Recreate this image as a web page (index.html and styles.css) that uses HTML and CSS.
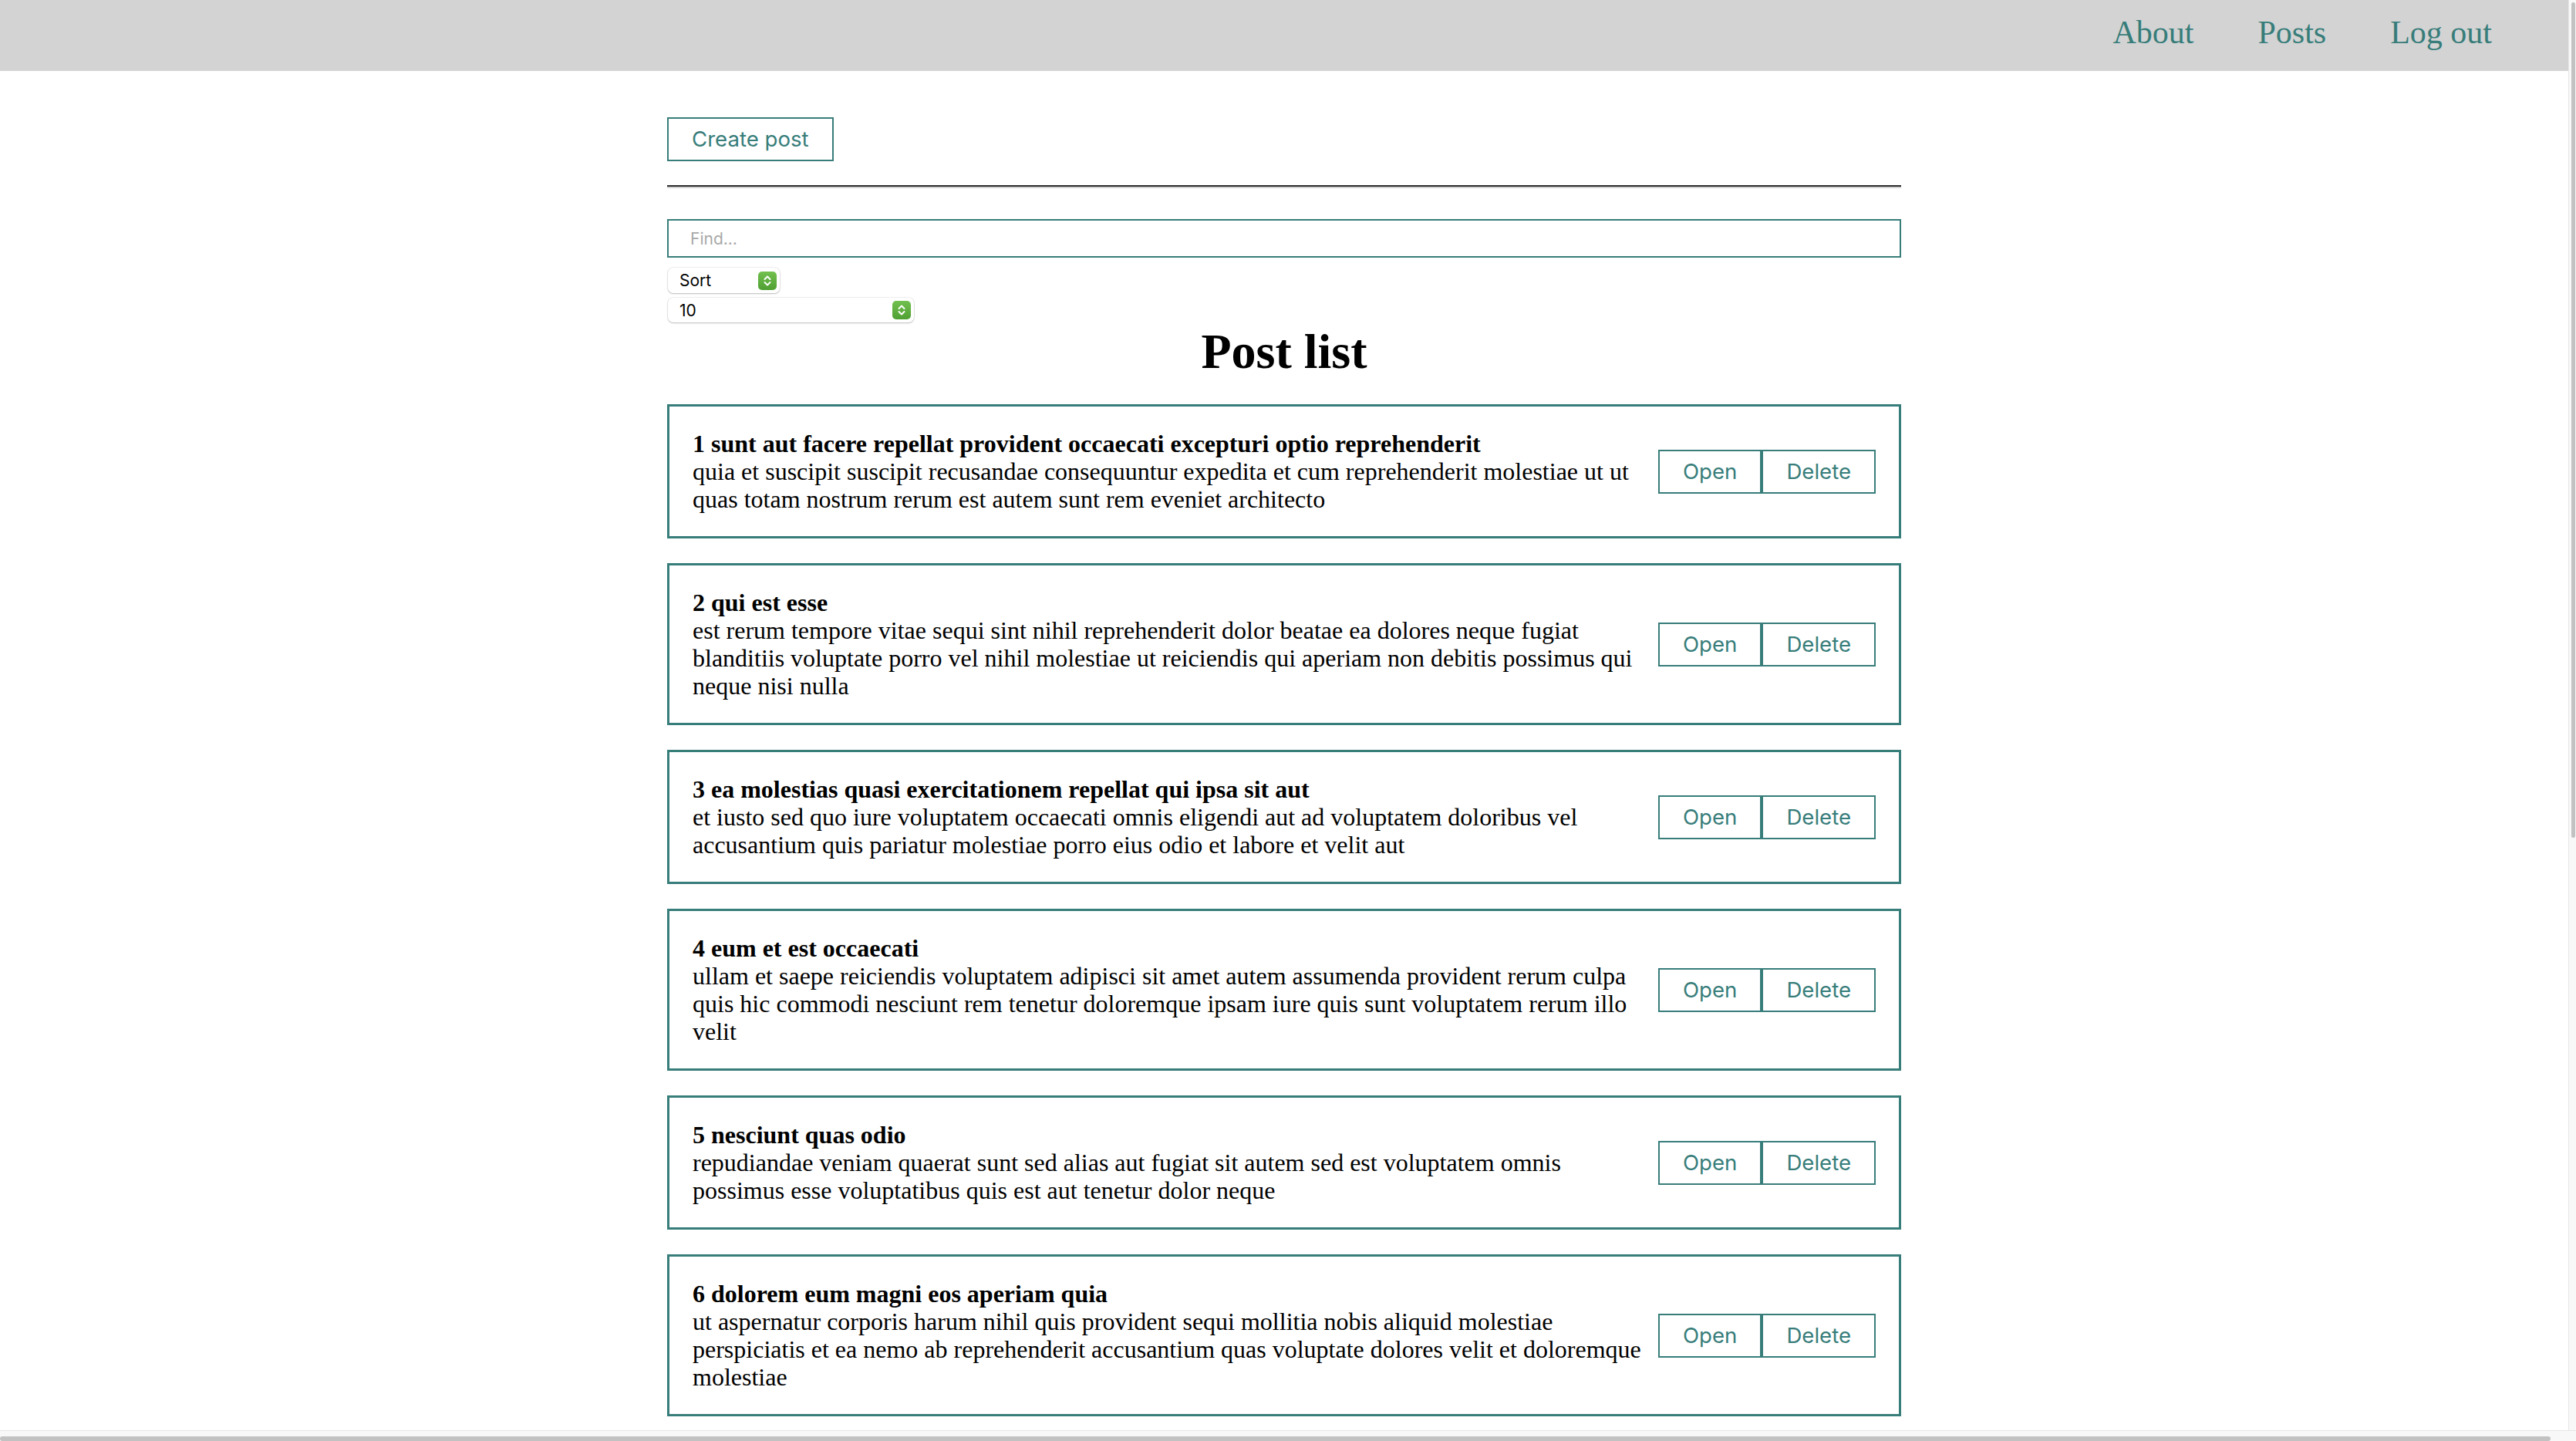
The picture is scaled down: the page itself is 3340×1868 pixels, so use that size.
FILE: index.html
```html
<!DOCTYPE html>
<html lang="en">
<head>
<meta charset="utf-8">
<title>Post list</title>
<link rel="stylesheet" href="styles.css">
</head>
<body>
<div class="app">
  <nav class="navbar">
    <a class="nav-link" href="#">About</a>
    <a class="nav-link" href="#">Posts</a>
    <a class="nav-link" href="#">Log out</a>
  </nav>
  <main class="page">
    <div class="toolbar">
      <button class="btn">Create post</button>
    </div>
    <hr class="divider">
    <input class="find" type="text" placeholder="Find...">
    <div class="selects">
      <div class="select select-sort">
        <span>Sort</span>
        <svg class="stepper" viewBox="0 0 24 24" width="24" height="24"><defs><linearGradient id="g1" x1="0" y1="0" x2="0" y2="1"><stop offset="0" stop-color="#72c04e"/><stop offset="1" stop-color="#4f9f33"/></linearGradient></defs><rect width="24" height="24" rx="5" fill="url(#g1)"/><path d="M8.5 10 L12 6.5 L15.5 10 M8.5 14 L12 17.5 L15.5 14" fill="none" stroke="#fff" stroke-width="2" stroke-linecap="round" stroke-linejoin="round"/></svg>
      </div>
      <div class="select select-limit">
        <span>10</span>
        <svg class="stepper" viewBox="0 0 24 24" width="24" height="24"><defs><linearGradient id="g2" x1="0" y1="0" x2="0" y2="1"><stop offset="0" stop-color="#72c04e"/><stop offset="1" stop-color="#4f9f33"/></linearGradient></defs><rect width="24" height="24" rx="5" fill="url(#g2)"/><path d="M8.5 10 L12 6.5 L15.5 10 M8.5 14 L12 17.5 L15.5 14" fill="none" stroke="#fff" stroke-width="2" stroke-linecap="round" stroke-linejoin="round"/></svg>
      </div>
    </div>
    <h1 class="title">Post list</h1>
    <div class="post">
      <div class="post-content">
        <strong>1 sunt aut facere repellat provident occaecati excepturi optio reprehenderit</strong>
        <div>quia et suscipit suscipit recusandae consequuntur expedita et cum reprehenderit molestiae ut ut quas totam nostrum rerum est autem sunt rem eveniet architecto</div>
      </div>
      <div class="post-btns"><button class="btn">Open</button><button class="btn">Delete</button></div>
    </div>
    <div class="post">
      <div class="post-content">
        <strong>2 qui est esse</strong>
        <div>est rerum tempore vitae sequi sint nihil reprehenderit dolor beatae ea dolores neque fugiat blanditiis voluptate porro vel nihil molestiae ut reiciendis qui aperiam non debitis possimus qui neque nisi nulla</div>
      </div>
      <div class="post-btns"><button class="btn">Open</button><button class="btn">Delete</button></div>
    </div>
    <div class="post">
      <div class="post-content">
        <strong>3 ea molestias quasi exercitationem repellat qui ipsa sit aut</strong>
        <div>et iusto sed quo iure voluptatem occaecati omnis eligendi aut ad voluptatem doloribus vel accusantium quis pariatur molestiae porro eius odio et labore et velit aut</div>
      </div>
      <div class="post-btns"><button class="btn">Open</button><button class="btn">Delete</button></div>
    </div>
    <div class="post">
      <div class="post-content">
        <strong>4 eum et est occaecati</strong>
        <div>ullam et saepe reiciendis voluptatem adipisci sit amet autem assumenda provident rerum culpa quis hic commodi nesciunt rem tenetur doloremque ipsam iure quis sunt voluptatem rerum illo velit</div>
      </div>
      <div class="post-btns"><button class="btn">Open</button><button class="btn">Delete</button></div>
    </div>
    <div class="post">
      <div class="post-content">
        <strong>5 nesciunt quas odio</strong>
        <div>repudiandae veniam quaerat sunt sed alias aut fugiat sit autem sed est voluptatem omnis possimus esse voluptatibus quis est aut tenetur dolor neque</div>
      </div>
      <div class="post-btns"><button class="btn">Open</button><button class="btn">Delete</button></div>
    </div>
    <div class="post">
      <div class="post-content">
        <strong>6 dolorem eum magni eos aperiam quia</strong>
        <div>ut aspernatur corporis harum nihil quis provident sequi mollitia nobis aliquid molestiae perspiciatis et ea nemo ab reprehenderit accusantium quas voluptate dolores velit et doloremque molestiae</div>
      </div>
      <div class="post-btns"><button class="btn">Open</button><button class="btn">Delete</button></div>
    </div>
  </main>
</div>
<div class="vscroll"><div class="vthumb"></div></div>
<div class="hscroll"><div class="hthumb"></div></div>
</body>
</html>
```
FILE: styles.css
```css
html, body {
  margin: 0;
  padding: 0;
  height: 100%;
  overflow: hidden;
  background: #fff;
}
body {
  font-family: "Liberation Serif", "Times New Roman", serif;
  color: #000;
}
.app {
  width: 3330px;
}
.navbar {
  box-sizing: border-box;
  height: 92px;
  background: #d3d3d3;
  display: flex;
  justify-content: flex-end;
  align-items: flex-start;
  gap: 83px;
  padding: 18px 99px 0 0;
}
.nav-link {
  font-family: "Liberation Serif", "Times New Roman", serif;
  font-size: 42px;
  line-height: 48px;
  color: #377d7a;
  text-decoration: none;
}
.page {
  width: 1600px;
  margin: 0 auto;
  padding-top: 60px;
}
.toolbar {
  display: flex;
}
.btn {
  font-family: Inter, "Liberation Sans", sans-serif;
  font-size: 27.6px;
  line-height: 33px;
  padding: 10px 30px;
  border: 2px solid #377d7a;
  background: transparent;
  color: #377d7a;
  margin: 0;
  cursor: pointer;
}
.divider {
  margin: 31px 0 40px;
  height: 0;
  border: none;
  border-top: 2px solid #2b2b2b;
  border-bottom: 2px solid #d4d4d4;
}
.find {
  display: block;
  box-sizing: border-box;
  width: 100%;
  height: 50px;
  margin: 0;
  padding: 0 28px;
  border: 2px solid #377d7a;
  font-family: Inter, "Liberation Sans", sans-serif;
  font-size: 21px;
  outline: none;
}
.find::placeholder {
  color: #a8a8a8;
}
.selects {
  display: flex;
  flex-direction: column;
  align-items: flex-start;
  gap: 6px;
  margin-top: 13px;
  padding-left: 1px;
}
.select {
  box-sizing: border-box;
  display: flex;
  align-items: center;
  justify-content: space-between;
  padding: 0 4px 0 15px;
  background: #fff;
  border-radius: 7px;
  box-shadow: 0 0 0 1px rgba(0, 0, 0, 0.06), 0 1px 2px rgba(0, 0, 0, 0.22);
  font-family: Inter, "Liberation Sans", sans-serif;
  font-size: 21px;
  color: #000;
}
.select-sort {
  width: 145px;
  height: 33px;
}
.select-limit {
  width: 319px;
  height: 32px;
}
.stepper {
  display: block;
  flex: none;
}
.title {
  margin: 0;
  padding-top: 2px;
  text-align: center;
  font-family: "Liberation Serif", "Times New Roman", serif;
  font-size: 64px;
  line-height: 72px;
  font-weight: bold;
}
.post {
  margin-top: 32px;
  border: 3px solid #377d7a;
  padding: 30px;
  display: flex;
  align-items: center;
  justify-content: space-between;
  font-size: 32px;
  line-height: 36px;
}
.post-content {
  flex: 1;
  min-width: 0;
}
.post-content strong {
  display: block;
}
.post-btns {
  flex: none;
  display: flex;
  margin-left: 10px;
}
.vscroll {
  position: fixed;
  top: 0;
  right: 0;
  width: 10px;
  height: 1854px;
  background: #f8f8f8;
  border-left: 1px solid #e6e6e6;
  box-sizing: border-box;
}
.vthumb {
  position: absolute;
  top: 3px;
  right: 1px;
  width: 5px;
  height: 1083px;
  border-radius: 3px;
  background: #c2c2c2;
}
.hscroll {
  position: fixed;
  left: 0;
  bottom: 0;
  width: 100%;
  height: 14px;
  background: #f8f8f8;
  border-top: 1px solid #e6e6e6;
  box-sizing: border-box;
}
.hthumb {
  position: absolute;
  left: 0;
  bottom: 0;
  width: 3307px;
  height: 6px;
  border-radius: 3px;
  background: #c2c2c2;
}
```
